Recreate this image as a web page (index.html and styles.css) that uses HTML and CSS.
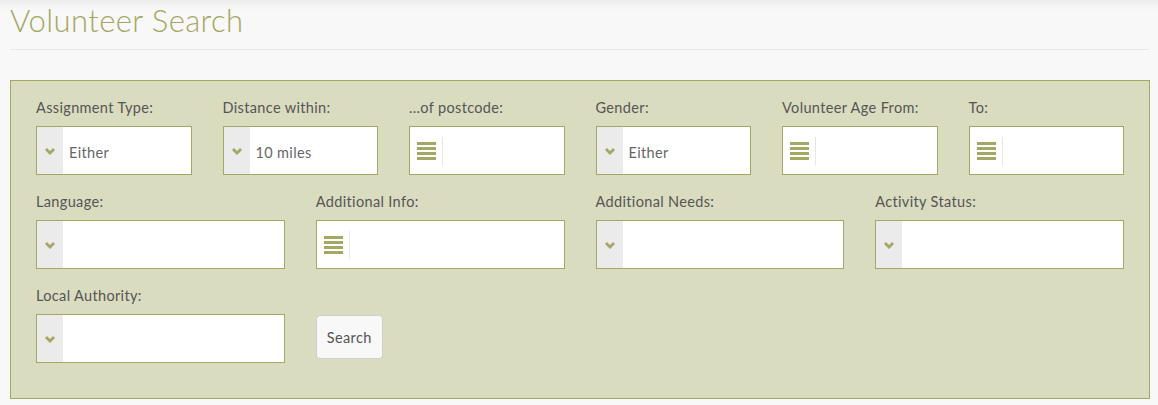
FILE: index.html
```html
<!DOCTYPE html>
<html>
<head>
<meta charset="utf-8">
<link rel="stylesheet" href="styles.css">
</head>
<body>
<div class="page">
  <h1 class="title">Volunteer Search</h1>
  <hr class="rule">
  <form class="panel">
    <div class="grid">
      <div class="group span2">
        <label class="lbl">Assignment Type:</label>
        <div class="field"><span class="sel-addon"><svg class="chev" viewBox="0 0 10 7"><path d="M0 2 L2 0 L5 3 L8 0 L10 2 L5 7 Z"/></svg></span><span class="val">Either</span></div>
      </div>
      <div class="group span2">
        <label class="lbl">Distance within:</label>
        <div class="field"><span class="sel-addon"><svg class="chev" viewBox="0 0 10 7"><path d="M0 2 L2 0 L5 3 L8 0 L10 2 L5 7 Z"/></svg></span><span class="val">10 miles</span></div>
      </div>
      <div class="group span2">
        <label class="lbl">...of postcode:</label>
        <div class="field"><span class="txt-addon"><svg class="bars" viewBox="0 0 19 18"><rect y="0" width="19" height="3"/><rect y="5" width="19" height="3"/><rect y="10" width="19" height="3"/><rect y="15" width="19" height="3"/></svg></span></div>
      </div>
      <div class="group span2">
        <label class="lbl">Gender:</label>
        <div class="field"><span class="sel-addon"><svg class="chev" viewBox="0 0 10 7"><path d="M0 2 L2 0 L5 3 L8 0 L10 2 L5 7 Z"/></svg></span><span class="val">Either</span></div>
      </div>
      <div class="group span2">
        <label class="lbl">Volunteer Age From:</label>
        <div class="field"><span class="txt-addon"><svg class="bars" viewBox="0 0 19 18"><rect y="0" width="19" height="3"/><rect y="5" width="19" height="3"/><rect y="10" width="19" height="3"/><rect y="15" width="19" height="3"/></svg></span></div>
      </div>
      <div class="group span2">
        <label class="lbl">To:</label>
        <div class="field"><span class="txt-addon"><svg class="bars" viewBox="0 0 19 18"><rect y="0" width="19" height="3"/><rect y="5" width="19" height="3"/><rect y="10" width="19" height="3"/><rect y="15" width="19" height="3"/></svg></span></div>
      </div>

      <div class="group span3">
        <label class="lbl">Language:</label>
        <div class="field"><span class="sel-addon"><svg class="chev" viewBox="0 0 10 7"><path d="M0 2 L2 0 L5 3 L8 0 L10 2 L5 7 Z"/></svg></span></div>
      </div>
      <div class="group span3">
        <label class="lbl">Additional Info:</label>
        <div class="field"><span class="txt-addon"><svg class="bars" viewBox="0 0 19 18"><rect y="0" width="19" height="3"/><rect y="5" width="19" height="3"/><rect y="10" width="19" height="3"/><rect y="15" width="19" height="3"/></svg></span></div>
      </div>
      <div class="group span3">
        <label class="lbl">Additional Needs:</label>
        <div class="field"><span class="sel-addon"><svg class="chev" viewBox="0 0 10 7"><path d="M0 2 L2 0 L5 3 L8 0 L10 2 L5 7 Z"/></svg></span></div>
      </div>
      <div class="group span3">
        <label class="lbl">Activity Status:</label>
        <div class="field"><span class="sel-addon"><svg class="chev" viewBox="0 0 10 7"><path d="M0 2 L2 0 L5 3 L8 0 L10 2 L5 7 Z"/></svg></span></div>
      </div>

      <div class="group span3">
        <label class="lbl">Local Authority:</label>
        <div class="field"><span class="sel-addon"><svg class="chev" viewBox="0 0 10 7"><path d="M0 2 L2 0 L5 3 L8 0 L10 2 L5 7 Z"/></svg></span></div>
      </div>
      <div class="group span3 btn-cell">
        <button type="button" class="btn">Search</button>
      </div>
    </div>
  </form>
</div>
</body>
</html>
```

FILE: styles.css
```css
* { box-sizing: border-box; }

html, body {
  margin: 0;
  padding: 0;
}

body {
  background: linear-gradient(to bottom, #ececec 0px, #f8f8f8 10px) #f8f8f8;
  font-family: Lato, "Noto Sans", sans-serif;
  color: #555;
  height: 405px;
  overflow: hidden;
}

.page {
  width: 1140px;
  margin-left: 10px;
}

.title {
  margin: 0;
  padding-top: 3px;
  height: 40px;
  font-size: 31px;
  font-weight: 300;
  line-height: 34px;
  color: #a3a762;
  letter-spacing: 0.4px;
}

.rule {
  margin: 9px 0 0 0;
  border: 0;
  border-top: 1px solid #e8e8e8;
  width: 1139px;
  height: 0;
}

.panel {
  margin-top: 30px;
  border: 1px solid #a3a862;
  background: #dadcc0;
  padding: 17px 25px 18px 25px;
  height: 319px;
}

.grid {
  display: grid;
  grid-template-columns: repeat(12, 1fr);
  column-gap: 31px;
}

.span2 { grid-column: span 2; }
.span3 { grid-column: span 3; }

.group {
  margin-bottom: 17px;
}

.lbl {
  display: block;
  font-size: 14.5px;
  line-height: 20px;
  height: 20px;
  margin-bottom: 8px;
  color: #555;
  letter-spacing: 0.35px;
  white-space: nowrap;
}

.field {
  display: flex;
  align-items: center;
  height: 49px;
  border: 1px solid #a3a862;
  background: #fff;
}

.sel-addon {
  flex: 0 0 26px;
  align-self: stretch;
  background: #ebebeb;
  display: flex;
  align-items: center;
  justify-content: center;
}

.chev {
  width: 10px;
  height: 7px;
  fill: #a3a862;
  margin-top: 2px;
}

.val {
  padding-left: 6px;
  padding-top: 4px;
  font-size: 14.5px;
  letter-spacing: 0.35px;
  color: #666;
}

.txt-addon {
  display: flex;
  align-items: center;
  height: 28px;
  padding-left: 7px;
  padding-right: 6px;
  border-right: 1px solid #e6e6e6;
}

.bars {
  width: 19px;
  height: 18px;
  fill: #a3a862;
}

.btn-cell {
  padding-top: 28px;
}

.btn {
  display: block;
  width: 67px;
  height: 44px;
  margin-top: 1px;
  border: 1px solid #cfcfcf;
  border-radius: 4px;
  background: #f8f8f8;
  font-family: Lato, "Noto Sans", sans-serif;
  font-size: 14.5px;
  letter-spacing: 0.35px;
  color: #555;
  padding: 0;
}
```
